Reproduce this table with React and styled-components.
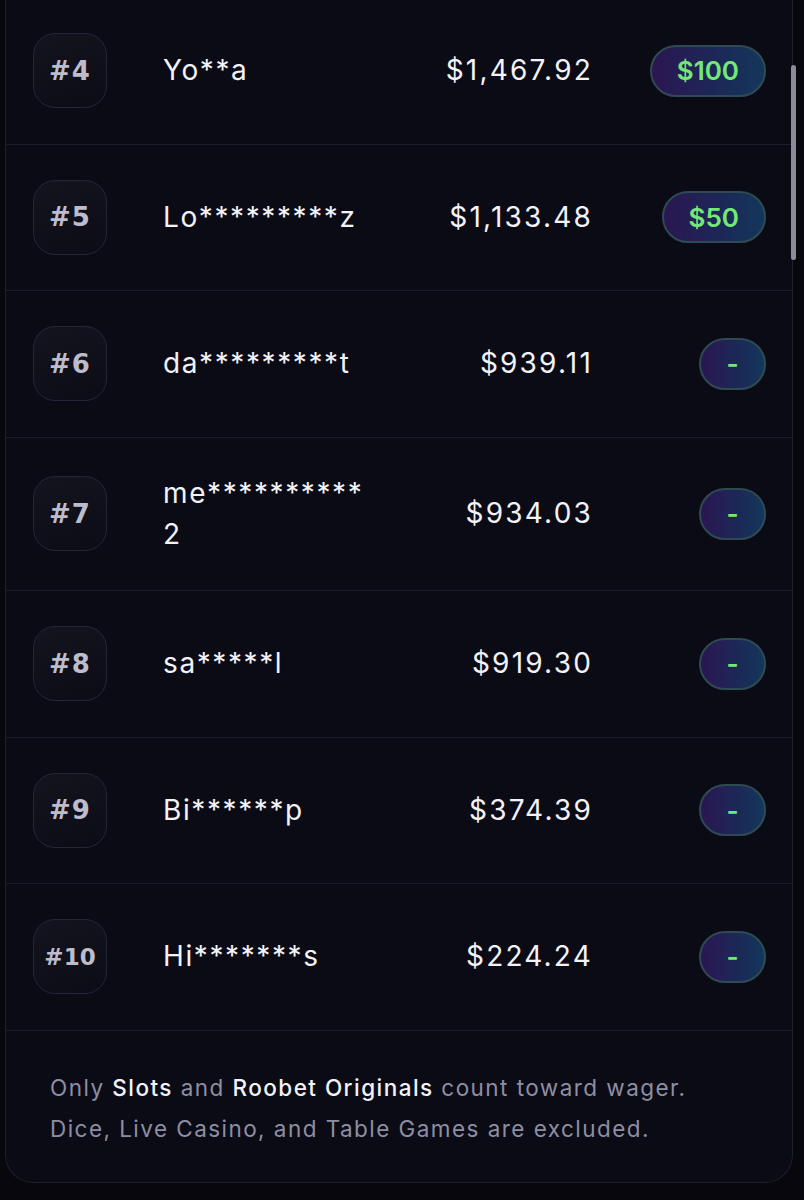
import styled, { createGlobalStyle } from 'styled-components';

const GlobalStyle = createGlobalStyle`
  html, body {
    margin: 0;
    padding: 0;
    background: #07070d;
  }
  body {
    font-family: Inter, "Noto Sans", sans-serif;
    -webkit-font-smoothing: antialiased;
  }
`

const rows = [
  { rank: 4, name: 'Yo**a', wager: '$1,467.92', prize: '$100' },
  { rank: 5, name: 'Lo*********z', wager: '$1,133.48', prize: '$50' },
  { rank: 6, name: 'da*********t', wager: '$939.11', prize: '-' },
  { rank: 7, name: 'me**********2', wager: '$934.03', prize: '-' },
  { rank: 8, name: 'sa*****l', wager: '$919.30', prize: '-' },
  { rank: 9, name: 'Bi******p', wager: '$374.39', prize: '-' },
  { rank: 10, name: 'Hi*******s', wager: '$224.24', prize: '-' },
];

const Page = styled.div`
  width: 804px;
  height: 1200px;
  overflow: hidden;
  padding: 0 11px 0 5px;
  box-sizing: border-box;
`

const Card = styled.section`
  position: relative;
  margin-top: -2px;
  background: #0b0b16;
  border: 1px solid #1f1f2d;
  border-top: none;
  border-radius: 0 0 28px 28px;
`

const ScrollThumb = styled.div`
  position: absolute;
  top: 67px;
  right: -4px;
  width: 5px;
  height: 195px;
  border-radius: 3px;
  background: #8b8b99;
`

const Row = styled.div`
  display: grid;
  grid-template-columns: 74px 261px 223px 1fr;
  align-items: center;
  padding: 35px 26px 35.5px 27px;
  border-bottom: 1px solid #1c1c29;
`

const Rank = styled.div`
  width: 74px;
  height: 75px;
  box-sizing: border-box;
  border-radius: 22px;
  border: 1.5px solid #25253a;
  background: linear-gradient(160deg, #14141f 0%, #0c0c17 100%);
  display: flex;
  align-items: center;
  justify-content: center;
  font-family: "DejaVu Sans", sans-serif;
  font-weight: 700;
  font-size: ${props => (props.wide ? '23px' : '26px')};
  letter-spacing: ${props => (props.wide ? '0' : '1px')};
  color: #bcbccc;
`

const Name = styled.div`
  padding-left: 56px;
  font-size: 28px;
  letter-spacing: 1.6px;
  line-height: 41px;
  color: #f2f2f7;
  word-break: break-all;
`

const Wager = styled.div`
  text-align: right;
  margin-right: -2px;
  font-size: 28px;
  letter-spacing: 2.2px;
  line-height: 41px;
  color: #f2f2f7;
`

const PrizeCell = styled.div`
  display: flex;
  justify-content: flex-end;
`

const Prize = styled.div`
  height: 52px;
  min-width: 67px;
  box-sizing: border-box;
  padding: 0 25px;
  border-radius: 26px;
  border: 2px solid #2e4a52;
  background: linear-gradient(90deg, #2b1652 0%, #1d2757 55%, #13375a 100%);
  display: flex;
  align-items: center;
  justify-content: center;
  font-size: 26px;
  font-weight: 600;
  color: #74e876;
`

const Footer = styled.p`
  margin: 0;
  padding: 36px 10px 33px 44px;
  font-size: 22.5px;
  letter-spacing: 1.45px;
  line-height: 41px;
  color: #8e8ea2;
`

const Strong = styled.span`
  color: #f2f2f7;
  font-weight: 500;
`

const App = () => {
  return (
    <Page>
      <GlobalStyle />
      <Card>
        <ScrollThumb />
        {rows.map((row) => (
          <Row key={row.rank}>
            <Rank wide={row.rank >= 10}>#{row.rank}</Rank>
            <Name>{row.name}</Name>
            <Wager>{row.wager}</Wager>
            <PrizeCell>
              <Prize>{row.prize}</Prize>
            </PrizeCell>
          </Row>
        ))}
        <Footer>
          Only <Strong>Slots</Strong> and <Strong>Roobet Originals</Strong> count toward wager.
          <br />
          Dice, Live Casino, and Table Games are excluded.
        </Footer>
      </Card>
    </Page>
  )
}

export default App
